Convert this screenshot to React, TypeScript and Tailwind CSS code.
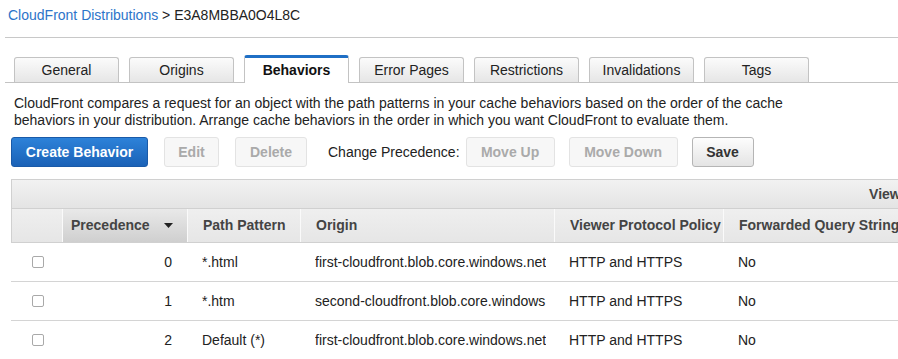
import React from 'react';

const tabs = ['General', 'Origins', 'Behaviors', 'Error Pages', 'Restrictions', 'Invalidations', 'Tags'];

const rows = [
  { prec: 0, path: '*.html', origin: 'first-cloudfront.blob.core.windows.net', policy: 'HTTP and HTTPS', qs: 'No' },
  { prec: 1, path: '*.htm', origin: 'second-cloudfront.blob.core.windows.net', policy: 'HTTP and HTTPS', qs: 'No' },
  { prec: 2, path: 'Default (*)', origin: 'first-cloudfront.blob.core.windows.net', policy: 'HTTP and HTTPS', qs: 'No' },
];

const cols = 'grid grid-cols-[50px_125px_113px_254px_169px_220px]';

const DisabledButton: React.FC<{ label: string; w: string }> = ({ label, w }) => (
  <button className={`${w} h-[30px] rounded-[3px] border border-[#e3e3e3] bg-[#f7f7f7] text-[#aaa] font-bold text-[14px]`}>
    {label}
  </button>
);

export default function App() {
  return (
    <div className="w-[898px] h-[359px] overflow-hidden bg-white text-[#222] text-[14px] font-['Liberation_Sans',Arial,sans-serif]">
      {/* breadcrumb */}
      <div className="h-[37px] pl-[8px] pt-[7px] leading-[17px]">
        <span className="text-[#2c74c9]">CloudFront Distributions</span>
        <span> &gt; E3A8MBBA0O4L8C</span>
      </div>
      <div className="ml-[5px] border-t border-[#c8c8c8]" />

      {/* tabs */}
      <div className="ml-[5px] pl-[9px] h-[45px] flex items-end gap-[10px] border-b border-[#c3c3c3]">
        {tabs.map(t =>
          t === 'Behaviors' ? (
            <div
              key={t}
              className="-mb-px w-[105px] h-[28px] flex items-center justify-center rounded-t-[3px] border border-b-0 border-[#c3c3c3] border-t-[3px] border-t-[#1f6fc5] bg-white font-bold text-[#111]"
            >
              {t}
            </div>
          ) : (
            <div
              key={t}
              className="w-[105px] h-[25px] flex items-center justify-center rounded-t-[3px] border border-b-0 border-[#c3c3c3] bg-gradient-to-b from-[#fbfbfb] to-[#e6e6e6] text-[#222]"
            >
              {t}
            </div>
          )
        )}
      </div>

      {/* description */}
      <p className="pl-[14px] mt-[12px] leading-[17px]">
        CloudFront compares a request for an object with the path patterns in your cache behaviors based on the order of the cache
        <br />
        behaviors in your distribution. Arrange cache behaviors in the order in which you want CloudFront to evaluate them.
      </p>

      {/* actions */}
      <div className="mt-[8px] pl-[11px] flex items-center">
        <button className="w-[137px] h-[30px] rounded-[3px] border border-[#1a5aa8] bg-gradient-to-b from-[#2d82d9] to-[#1b62b7] text-white font-bold text-[14px]">
          Create Behavior
        </button>
        <div className="ml-[16px]">
          <DisabledButton label="Edit" w="w-[55px]" />
        </div>
        <div className="ml-[16px]">
          <DisabledButton label="Delete" w="w-[72px]" />
        </div>
        <span className="ml-[21px] mr-[6px]">Change Precedence:</span>
        <DisabledButton label="Move Up" w="w-[89px]" />
        <div className="ml-[14px]">
          <DisabledButton label="Move Down" w="w-[109px]" />
        </div>
        <button className="ml-[14px] w-[62px] h-[30px] rounded-[3px] border border-[#b5b5b5] bg-gradient-to-b from-[#fdfdfd] to-[#e4e4e4] text-[#333] font-bold text-[14px]">
          Save
        </button>
      </div>

      {/* table */}
      <div className="mt-[12px] ml-[11px] w-[940px]">
        <div className="h-[29px] border-t border-l border-[#d0d0d0] bg-gradient-to-b from-[#f2f2f2] to-[#e4e4e4] flex items-center justify-end pr-[37px] font-bold text-[#444]">
          Viewer
        </div>
        <div className={`${cols} h-[35px] border-t border-b border-l border-[#d0d0d0] bg-gradient-to-b from-[#efefef] to-[#e6e6e6] font-bold text-[#444]`}>
          <div />
          <div className="border-l border-[#fafafa] bg-gradient-to-b from-[#e9e9e9] to-[#cfcfcf] flex items-center pl-[8px] gap-[14px]">
            Precedence
            <svg width="9" height="5" viewBox="0 0 9 5" className="mt-[-1px]">
              <path d="M0 0H9L4.5 5Z" fill="#222" />
            </svg>
          </div>
          <div className="border-l border-[#fafafa] flex items-center pl-[15px]">Path Pattern</div>
          <div className="border-l border-[#fafafa] flex items-center pl-[15px]">Origin</div>
          <div className="border-l border-[#fafafa] flex items-center pl-[15px]">Viewer Protocol Policy</div>
          <div className="border-l border-[#fafafa] flex items-center pl-[15px] whitespace-nowrap">Forwarded Query Strings</div>
        </div>
        {rows.map(r => (
          <div key={r.prec} className={`${cols} h-[39px] border-b border-[#d4d4d4] items-center text-[#222]`}>
            <div className="flex justify-center pl-[4px]">
              <span className="block w-[12px] h-[12px] rounded-[2px] border border-[#a9a9a9] bg-white" />
            </div>
            <div className="text-right pr-[14px]">{r.prec}</div>
            <div className="pl-[16px]">{r.path}</div>
            <div className="pl-[16px]">
              <span className="block w-[231px] overflow-hidden whitespace-nowrap">{r.origin}</span>
            </div>
            <div className="pl-[16px]">{r.policy}</div>
            <div className="pl-[16px]">{r.qs}</div>
          </div>
        ))}
      </div>
    </div>
  );
}
